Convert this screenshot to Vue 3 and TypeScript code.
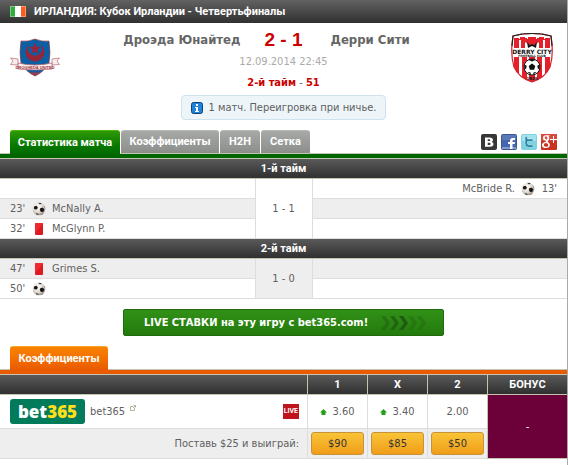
<script setup lang="ts">
import { ref } from 'vue'

type Kind = 'goal' | 'red'

interface MatchEvent {
  minute: string
  kind: Kind
  player: string
}

interface Row {
  home?: MatchEvent
  away?: MatchEvent
}

interface Period {
  title: string
  score: string
  shaded: boolean
  rows: Row[]
}

interface Odd {
  label: string
  value: string
  win: string
  up: boolean
}

const tabs = [
  { label: 'Статистика матча', size: 'xl' },
  { label: 'Коэффициенты', size: 'lg' },
  { label: 'H2H', size: 'sm' },
  { label: 'Сетка', size: 'md' },
]
const activeTab = ref(0)

const periods: Period[] = [
  {
    title: '1-й тайм',
    score: '1 - 1',
    shaded: false,
    rows: [
      { away: { minute: "13'", kind: 'goal', player: 'McBride R.' } },
      { home: { minute: "23'", kind: 'goal', player: 'McNally A.' } },
      { home: { minute: "32'", kind: 'red', player: 'McGlynn P.' } },
    ],
  },
  {
    title: '2-й тайм',
    score: '1 - 0',
    shaded: true,
    rows: [
      { home: { minute: "47'", kind: 'red', player: 'Grimes S.' } },
      { home: { minute: "50'", kind: 'goal', player: '' } },
    ],
  },
]

const odds: Odd[] = [
  { label: '1', value: '3.60', win: '$90', up: true },
  { label: 'X', value: '3.40', win: '$85', up: true },
  { label: '2', value: '2.00', win: '$50', up: false },
]

function isShaded(period: Period, index: number): boolean {
  return (index % 2 === 1) !== period.shaded
}
</script>

<template>
  <svg class="defs" aria-hidden="true">
    <defs>
      <radialGradient id="ballShade" cx="40%" cy="35%" r="70%">
        <stop offset="0" stop-color="#ffffff" />
        <stop offset="0.6" stop-color="#e0d8d0" />
        <stop offset="1" stop-color="#8a8178" />
      </radialGradient>
      <symbol id="goal" viewBox="0 0 14 14">
        <circle cx="7" cy="7" r="6.3" fill="url(#ballShade)" />
        <path d="M2.2 4.6l2.2-.9 1.5 1.5-.8 2-2.2.2-1.1-1.2zM8.3 6.2l2.5-.6 1.5 1.9-.9 2.3-2.4.2-1.2-1.9z" fill="#161616" />
        <path d="M6.2.8l2.6.1 1 1-2.2.4zM4 11l2 .8.6 1.3-2-.6zM12.4 3.6l.8 1.9-.6-.4zM.8 8.4l.9 1.9-.4-.3zM9.4 12.4l1.9-.9-1 1z" fill="#333" />
      </symbol>
      <symbol id="red" viewBox="0 0 14 14">
        <rect x="3" y="1" width="8" height="12" rx="1" fill="#dc1a22" />
        <path d="M3 2a1 1 0 0 1 1-1h6a1 1 0 0 1 1 1L3 11z" fill="#ee2a30" />
      </symbol>
    </defs>
  </svg>

  <main class="page">
    <header class="league">
      <svg class="flag" viewBox="0 0 16 11" aria-hidden="true">
        <rect width="16" height="11" fill="#fff" />
        <rect width="5" height="11" fill="#2fae3c" />
        <rect x="11" width="5" height="11" fill="#ff5a1f" />
        <rect x=".5" y=".5" width="15" height="10" fill="none" stroke="#fff" stroke-opacity=".35" />
      </svg>
      <h1>ИРЛАНДИЯ: Кубок Ирландии - Четвертьфиналы</h1>
    </header>

    <section class="match">
      <svg class="crest" viewBox="0 0 50 50" role="img" aria-label="Дроэда Юнайтед">
        <path d="M11 8q7 1 14-2 7 3 14 2 2 12 0 22-5 9-14 13-9-4-14-13-2-10 0-22z" fill="#0b5fa5" stroke="#a0303a" stroke-width=".6" />
        <circle cx="25" cy="19" r="9.5" fill="#962639" />
        <circle cx="25" cy="15.5" r="7.2" fill="#0b5fa5" />
        <path d="M25 9.500l1.600 4.200 4.400.2-3.400 2.800 1.100 4.300-3.700-2.400-3.700 2.400 1.100-4.300-3.400-2.800 4.400-.2z" fill="#962639" />
        <path d="M.5 25l7.500 1v6l-7.500-.5L3 28zM49.500 25L42 26v6l7.500-.5L47 28z" fill="#f9eeee" stroke="#b56a74" stroke-width=".7" />
        <path d="M8 30q17 4 34 0v6q-17 2-34 0z" fill="#fbf1f1" stroke="#b56a74" stroke-width=".8" />
        <text x="25" y="36" text-anchor="middle" class="crest-motto">DROGHEDA UNITED</text>
        <path d="M19 39q6 1 12 0l-6 4z" fill="#9d3c4c" />
      </svg>

      <div class="summary">
        <div class="teams">
          <span class="team home">Дроэда Юнайтед</span>
          <strong class="score">2 - 1</strong>
          <span class="team away">Дерри Сити</span>
        </div>
        <time class="date">12.09.2014 22:45</time>
        <div class="status"><b>2-й тайм</b> - <b>51</b></div>
        <div class="notice">
          <svg class="info" viewBox="0 0 12 12" aria-hidden="true">
            <rect x=".5" y=".5" width="11" height="11" rx="2" fill="#1f83dc" stroke="#143f70" />
            <path d="M5 2h2v2H5zM4 5h3v4h1v1H4V9h1V6H4z" fill="#fff" />
          </svg>
          <span>1 матч. Переигровка при ничье.</span>
        </div>
      </div>

      <svg class="crest" viewBox="0 0 50 50" role="img" aria-label="Дерри Сити">
        <defs>
          <clipPath id="shield"><path d="M6 3q19-5 38 0 3 18-1 31-5 11-18 15Q12 45 7 34 3 21 6 3z" /></clipPath>
        </defs>
        <g clip-path="url(#shield)">
          <rect width="50" height="50" fill="#fff" />
          <path d="M7 5h5v45H7zM15 5h5v45h-5zM22 5h6v45h-6zM30 5h5v45h-5zM38 5h5v45h-5z" fill="#e5202b" />
          <path d="M8 6h5V4h5v2h3V4h8v2h3V4h5v2h5v10H8z" fill="#e5202b" />
          <path d="M12 7h2v9h-2zM36 7h2v9h-2z" fill="#fff" />
          <path d="M18 9l5 3h4l5-3v7H18z" fill="#fff" />
          <path d="M20 9l3 3 2-1 2 1 3-3-1 6-4-2-4 2z" fill="#15151a" />
          <rect y="15" width="50" height="9" fill="#fff" />
        </g>
        <path d="M6 3q19-5 38 0 3 18-1 31-5 11-18 15Q12 45 7 34 3 21 6 3z" fill="none" stroke="#d71f2a" stroke-width="1.2" />
        <path d="M5 13l1-10q19-5 38 0l1 10" fill="none" stroke="#222" stroke-width="1.2" />
        <text x="25" y="20.5" text-anchor="middle" class="crest-name">DERRY CITY</text>
        <text x="25" y="23.5" text-anchor="middle" class="crest-sub">FOOTBALL CLUB</text>
        <circle cx="25" cy="34" r="8" fill="#fff" stroke="#111" />
        <path d="M25 30.500l3.300 2.400-1.200 3.800h-4.200l-1.200-3.800zM21.500 27l3.500 1.600 3.500-1.600-3.500-1zM17.500 31.500l2.200 1.200-.7 3.600-1.500-1zM32.500 31.500l-2.200 1.200.7 3.600 1.500-1zM20.500 39l2.800.3.700 2.500zM29.500 39l-2.800.3-.7 2.500z" fill="#111" />
        <text x="25" y="47" text-anchor="middle" class="crest-year">1928</text>
      </svg>
    </section>

    <div class="tabbar">
      <nav class="tabs">
        <button
          v-for="(tab, i) in tabs"
          :key="tab.label"
          type="button"
          class="tab"
          :class="[tab.size, { active: i === activeTab }]"
          @click="activeTab = i"
        >
          {{ tab.label }}
        </button>
      </nav>
      <div class="social">
        <a href="#vk" aria-label="ВКонтакте">
          <svg viewBox="0 0 16 16">
            <rect width="16" height="16" rx="2" fill="#373737" />
            <path d="M4 3.500h4.500q3.500 0 3.500 2.500 0 1.300-1.300 1.900 1.800.4 1.800 2.200 0 2.700-3.500 2.700H4zM6.700 5.300v1.800h1.400q1.100 0 1.100-.9T8.100 5.300zM6.700 8.800v2.200h1.700q1.200 0 1.200-1.100T8.400 8.800z" fill="#fff" fill-rule="evenodd" />
          </svg>
        </a>
        <a href="#facebook" aria-label="Facebook">
          <svg viewBox="0 0 16 16">
            <rect width="16" height="16" rx="2" fill="#3a5794" />
            <rect x="1" y="1" width="14" height="14" fill="#4467ad" />
            <rect x="1" y="1" width="14" height="5" fill="#5878b6" />
            <rect x="1" y="13" width="14" height="2" fill="#7f9bd0" />
            <path d="M9 15v-5H7V8h2V7q0-3 3-3h2v2h-1.500q-1 0-1 1v1H14l-.3 2h-2.200v5z" fill="#fff" />
          </svg>
        </a>
        <a href="#twitter" aria-label="Twitter">
          <svg viewBox="0 0 16 16">
            <rect width="16" height="16" rx="2" fill="#7fd0e0" />
            <rect x="1" y="1" width="14" height="6" fill="#a3e2ea" />
            <path d="M4 3.500q0-1 1.200-1t1.300 1V5H11q1.200 0 1.200 1.200T11 7.500H6.500v1.700q0 1.600 1.600 1.600H11q1.200 0 1.200 1.300T11 13.500H8q-4 0-4-4z" fill="#2a86a8" stroke="#d8f6fa" stroke-width=".5" />
          </svg>
        </a>
        <a href="#google" aria-label="Google+">
          <svg viewBox="0 0 16 16">
            <rect width="16" height="16" rx="1" fill="#c8321f" />
            <rect width="16" height="7" fill="#d9483a" />
            <path d="M8.500 1.200H4.800Q2 1.400 2 3.900t2.600 2.500q-.5.9.5 1.600Q1 8.200 1 11.200q0 2.800 3.700 2.800 4.200 0 4.200-3.200 0-1.500-1.600-2.500-1-.7-.2-1.500 1.200-.9 1.200-2.600 0-1.100-.8-1.900h.8zM4.900 2.200q1.300.2 1.500 1.800.1 1.500-1.100 1.500-1.300-.2-1.500-1.800 0-1.300 1.100-1.500zM5.300 9q2 .9 2 2.200 0 1.600-2.300 1.600-2.200-.1-2.200-1.800 0-1.800 2.500-2z" fill="#fff" fill-rule="evenodd" />
            <path d="M12 2h1v3h3v1h-3v3h-1V6H9V5h3z" fill="#fff" />
          </svg>
        </a>
      </div>
    </div>
    <div class="stripe green"></div>

    <table class="events">
      <colgroup>
        <col />
        <col class="mid" />
        <col />
      </colgroup>
      <tbody v-for="period in periods" :key="period.title">
        <tr class="title">
          <th colspan="3">{{ period.title }}</th>
        </tr>
        <tr v-for="(row, i) in period.rows" :key="i" :class="{ shaded: isShaded(period, i) }">
          <td>
            <div v-if="row.home" class="event">
              <span class="minute">{{ row.home.minute }}</span>
              <svg class="mark"><use :href="'#' + row.home.kind" /></svg>
              <span>{{ row.home.player }}</span>
            </div>
          </td>
          <td v-if="i === 0" class="period-score" :rowspan="period.rows.length">{{ period.score }}</td>
          <td>
            <div v-if="row.away" class="event reverse">
              <span class="minute">{{ row.away.minute }}</span>
              <svg class="mark"><use :href="'#' + row.away.kind" /></svg>
              <span>{{ row.away.player }}</span>
            </div>
          </td>
        </tr>
      </tbody>
    </table>

    <a class="live-bet" href="#live">
      <span>LIVE СТАВКИ на эту игру с bet365.com!</span>
      <svg class="chevrons" viewBox="0 0 46 14" aria-hidden="true">
        <g fill="#1f5a12">
          <path d="M0 0h4l5 7-5 7H0l5-7z" opacity=".5" />
          <path d="M9 0h4l5 7-5 7H9l5-7z" opacity=".75" />
          <path d="M18 0h4l5 7-5 7h-4l5-7z" />
          <path d="M27 0h4l5 7-5 7h-4l5-7z" opacity=".3" />
          <path d="M36 0h4l5 7-5 7h-4l5-7z" opacity=".3" />
        </g>
      </svg>
    </a>

    <div class="tabbar">
      <nav class="tabs">
        <button type="button" class="tab lg orange">Коэффициенты</button>
      </nav>
    </div>
    <div class="stripe amber"></div>

    <table class="odds">
      <colgroup>
        <col />
        <col v-for="odd in odds" :key="odd.label" class="odd" />
        <col class="bonus-col" />
      </colgroup>
      <thead>
        <tr class="title">
          <th></th>
          <th v-for="odd in odds" :key="odd.label">{{ odd.label }}</th>
          <th>БОНУС</th>
        </tr>
      </thead>
      <tbody>
        <tr class="prices">
          <td>
            <div class="bookmaker">
              <a class="logo" href="#bet365" aria-label="bet365">bet<span>365</span></a>
              <a class="name" href="#bet365">bet365</a>
              <svg class="external" viewBox="0 0 6 6" aria-hidden="true">
                <path d="M3 1.500H.5v4h4V3M3.500.5h2v2M5.500.5L3 3" fill="none" stroke="#b3b39d" />
              </svg>
              <span class="live">LIVE</span>
            </div>
          </td>
          <td v-for="odd in odds" :key="odd.label">
            <div class="price">
              <svg v-if="odd.up" class="up" viewBox="0 0 7 6" aria-hidden="true">
                <path d="M3.500 0L7 3.500H5.500V6h-4V3.500H0z" fill="#23a018" />
              </svg>
              <span>{{ odd.value }}</span>
            </div>
          </td>
          <td class="bonus" rowspan="2">-</td>
        </tr>
        <tr class="stakes">
          <td class="offer">Поставь $25 и выиграй:</td>
          <td v-for="odd in odds" :key="odd.label">
            <button type="button" class="stake">{{ odd.win }}</button>
          </td>
        </tr>
      </tbody>
    </table>
  </main>
</template>

<style>
body {
  margin: 0;
  background: #fff;
}
</style>

<style scoped>
.defs {
  position: absolute;
  width: 0;
  height: 0;
}

.page {
  box-sizing: border-box;
  min-height: 100vh;
  border-right: 1px solid #aaa;
  color: #5f5f5f;
  font: 11px/16px "DejaVu Sans Condensed", "Noto Sans", sans-serif;
}

button {
  padding: 0;
  border: 0;
  font: inherit;
  cursor: pointer;
}

a {
  color: inherit;
  text-decoration: none;
}

.league {
  display: flex;
  align-items: center;
  gap: 8px;
  height: 23px;
  padding: 0 10px;
  background: linear-gradient(#626262, #303030);
  color: #fff;
}

.league h1 {
  margin: 0;
  font: bold 11px/16px Roboto, sans-serif;
}

.flag {
  width: 16px;
  height: 11px;
}

.match {
  display: flex;
  align-items: flex-start;
  padding: 6px 10px 10px;
}

.crest {
  flex: none;
  width: 50px;
  height: 50px;
  margin-top: 4px;
}

.crest-motto {
  fill: #a0303a;
  font: bold 4px "Liberation Sans", sans-serif;
}

.crest-name {
  fill: #111;
  font: bold 6px "DejaVu Sans", sans-serif;
}

.crest-sub {
  fill: #111;
  font: bold 3px "DejaVu Sans", sans-serif;
}

.crest-year {
  fill: #111;
  font: bold 4px "DejaVu Sans", sans-serif;
}

.summary {
  flex: 1;
  display: flex;
  flex-direction: column;
  align-items: center;
}

.teams {
  display: grid;
  grid-template-columns: 1fr 86px 1fr;
  align-self: stretch;
  align-items: center;
  line-height: 22px;
}

.team {
  font-size: 13px;
  font-weight: bold;
  color: #666;
  white-space: nowrap;
}

.home {
  text-align: right;
}

.away {
  padding-left: 4px;
}

.score {
  color: #c00;
  font-family: "Liberation Sans", sans-serif;
  font-size: 19px;
  text-align: center;
}

.date {
  margin-top: 3px;
  color: #aaa;
}

.status {
  margin-top: 5px;
}

.status b {
  color: #c00;
}

.notice {
  display: flex;
  align-items: center;
  gap: 6px;
  margin-top: 4px;
  padding: 4px 9px 3px;
  border: 1px solid #cfe2ed;
  border-radius: 4px;
  background: #edf5f9;
}

.info {
  width: 12px;
  height: 12px;
}

.tabbar {
  display: flex;
  align-items: flex-end;
  justify-content: space-between;
  padding: 0 10px;
}

.tabs {
  display: flex;
  gap: 1px;
}

.tab {
  height: 23px;
  border-radius: 3px 3px 0 0;
  border-top: 1px solid #b9bbb9;
  background: linear-gradient(#a7a9a7, #8c8e8c);
  color: #fff;
  font: bold 11px/22px Roboto, sans-serif;
  white-space: nowrap;
}

.tab.xl {
  width: 110px;
}

.tab.lg {
  width: 98px;
}

.tab.md {
  width: 49px;
}

.tab.sm {
  width: 40px;
}

.tab.active {
  position: relative;
  height: 24px;
  margin-bottom: -1px;
  border-color: #4db80a;
  background: linear-gradient(#2f9a06, #0a7a02 60%, #006a00);
}

.tab.orange {
  position: relative;
  height: 24px;
  margin-bottom: -1px;
  border-color: #f5a623;
  background: linear-gradient(#f98200, #f37000 50%, #e95a00);
}

.social {
  display: flex;
  gap: 4px;
  margin-bottom: 3px;
}

.social a,
.social svg {
  display: block;
  width: 16px;
  height: 16px;
}

.stripe {
  height: 4px;
  border: solid #c4c4b0;
  border-width: 1px 0;
}

.green {
  background: #060;
}

.amber {
  background: #e85b00;
}

table {
  width: 100%;
  table-layout: fixed;
  border-collapse: separate;
  border-spacing: 0;
}

th,
td {
  box-sizing: border-box;
  padding: 0;
}

.title th {
  height: 20px;
  border-bottom: 1px solid #c4c4b0;
  background: linear-gradient(#5a5a5a, #303030);
  color: #fff;
  font: bold 11px/18px Roboto, sans-serif;
}

.mid {
  width: 58px;
}

.events td {
  height: 20px;
  border-bottom: 1px solid #ddd;
}

.shaded td {
  background: #eee;
}

.events .period-score {
  border-right: 1px solid #ddd;
  border-left: 1px solid #ddd;
  text-align: center;
}

.event {
  display: flex;
  align-items: center;
  gap: 6px;
  padding: 0 10px;
  line-height: 18px;
}

.reverse {
  flex-direction: row-reverse;
}

.minute {
  width: 16px;
  white-space: nowrap;
}

.reverse .minute {
  text-align: right;
}

.mark {
  width: 14px;
  height: 14px;
}

.live-bet {
  display: flex;
  box-sizing: border-box;
  align-items: center;
  justify-content: space-between;
  width: 321px;
  height: 27px;
  margin: 10px auto;
  padding: 0 16px 0 20px;
  border: 1px solid #1f6b0d;
  border-radius: 2px;
  background: linear-gradient(#319117, #237a0c);
  color: #fff;
  font-weight: bold;
  white-space: nowrap;
}

.chevrons {
  width: 46px;
  height: 14px;
}

.odd {
  width: 60px;
}

.bonus-col {
  width: 80px;
}

.odds th + th {
  border-left: 1px solid #c4c4b0;
}

.odds td {
  border-bottom: 1px solid #ddd;
}

.odds td + td {
  border-left: 1px solid #ddd;
}

.prices td {
  height: 34px;
}

.bookmaker {
  display: flex;
  align-items: center;
  padding: 0 8px 0 10px;
}

.logo {
  width: 75px;
  border-radius: 3px;
  background: #027b5b;
  color: #fff;
  font: 800 17px/25px "Open Sans", sans-serif;
  text-align: center;
}

.logo span {
  color: #ffdf1b;
}

.name {
  margin-left: 5px;
}

.external {
  width: 6px;
  height: 6px;
  margin: 0 auto 8px 5px;
}

.live {
  padding: 0 1px;
  background: #c0141c;
  color: #fff;
  font: bold 7px/15px Roboto, sans-serif;
}

.price {
  display: flex;
  align-items: center;
  justify-content: center;
  gap: 5px;
}

.up {
  width: 7px;
  height: 6px;
}

.odds .bonus {
  border-color: #c4c4b0;
  background: #6c0038;
  color: #fff;
  text-align: center;
}

.stakes td {
  height: 30px;
  background: #eee;
}

.offer {
  padding-right: 8px;
  text-align: right;
}

.stake {
  display: block;
  box-sizing: border-box;
  width: 53px;
  height: 23px;
  margin: 0 auto;
  border: 1px solid #c8923a;
  border-radius: 3px;
  background: linear-gradient(#f9c437, #f09d19);
  color: #333;
}
</style>
